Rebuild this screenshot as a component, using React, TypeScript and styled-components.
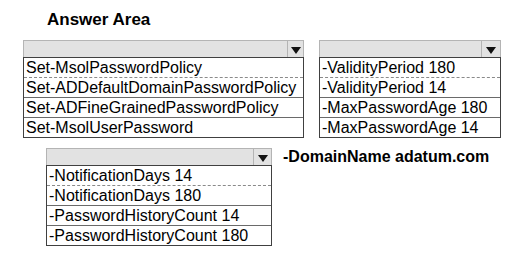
import styled, { createGlobalStyle } from "styled-components";

const GlobalStyle = createGlobalStyle`
  html, body {
    margin: 0;
    padding: 0;
    background: #ffffff;
  }
  body {
    font-family: "Liberation Sans", Arial, sans-serif;
    color: #000000;
  }
`;

type Box = {
  id: string;
  width: number;
  arrow: number;
  items: string[];
};

const cmdlets: Box = {
  id: "cmdlet",
  width: 281,
  arrow: 16,
  items: [
    "Set-MsolPasswordPolicy",
    "Set-ADDefaultDomainPasswordPolicy",
    "Set-ADFineGrainedPasswordPolicy",
    "Set-MsolUserPassword"
  ]
};

const validity: Box = {
  id: "validity",
  width: 182,
  arrow: 19,
  items: [
    "-ValidityPeriod 180",
    "-ValidityPeriod 14",
    "-MaxPasswordAge 180",
    "-MaxPasswordAge 14"
  ]
};

const notification: Box = {
  id: "notify",
  width: 226,
  arrow: 18,
  items: [
    "-NotificationDays 14",
    "-NotificationDays 180",
    "-PasswordHistoryCount 14",
    "-PasswordHistoryCount 180"
  ]
};

const DropDown = ({ box }: { box: Box }) => (
  <Select $width={box.width}>
    <Header>
      <HeaderFill />
      <ArrowBox $width={box.arrow}>
        <Triangle />
      </ArrowBox>
    </Header>
    <List>
      {box.items.map((item, i) => (
        <Option key={item} $index={i}>
          {item}
        </Option>
      ))}
    </List>
  </Select>
);

const App = () => {
  return (
    <>
      <GlobalStyle />
      <Page>
        <Title>Answer Area</Title>
        <TopRow>
          <DropDown box={cmdlets} />
          <DropDown box={validity} />
        </TopRow>
        <BottomRow>
          <DropDown box={notification} />
          <Domain>-DomainName adatum.com</Domain>
        </BottomRow>
      </Page>
    </>
  );
};

export default App;

const Page = styled.div`
  width: 529px;
  height: 258px;
  padding-top: 10px;
  box-sizing: border-box;
  display: flex;
  flex-direction: column;
`;

const Title = styled.h1`
  margin: 0 0 10px 47px;
  font-size: 17px;
  line-height: 20px;
  font-weight: bold;
`;

const TopRow = styled.div`
  display: flex;
  align-items: flex-start;
  gap: 15px;
  padding-left: 23px;
`;

const BottomRow = styled.div`
  display: flex;
  align-items: flex-start;
  gap: 11px;
  padding-left: 46px;
  margin-top: 10px;
`;

const Select = styled.div<{ $width: number }>`
  width: ${({ $width }) => $width}px;
  display: flex;
  flex-direction: column;
`;

const Header = styled.div`
  display: flex;
  height: 17px;
  box-sizing: border-box;
  background: #e2e2e2;
  border: 1px solid #b4b4b4;
  border-bottom: none;
`;

const HeaderFill = styled.div`
  flex: 1;
`;

const ArrowBox = styled.div<{ $width: number }>`
  width: ${({ $width }) => $width}px;
  border-left: 1px solid #b4b4b4;
  display: flex;
  align-items: flex-end;
  justify-content: center;
  padding-bottom: 3px;
  box-sizing: border-box;
`;

const Triangle = styled.div`
  width: 0;
  height: 0;
  border-left: 5px solid transparent;
  border-right: 5px solid transparent;
  border-top: 7px solid #111111;
`;

const List = styled.div`
  border: 1px solid #404040;
  display: flex;
  flex-direction: column;
`;

const Option = styled.div<{ $index: number }>`
  height: 19px;
  line-height: 19px;
  padding-left: 2px;
  font-size: 16px;
  white-space: nowrap;
  overflow: hidden;
  border-top: ${({ $index }) =>
    $index === 0
      ? "none"
      : $index === 1
      ? "1px dashed #8a8a8a"
      : "1px solid #6a6a6a"};
`;

const Domain = styled.div`
  height: 17px;
  line-height: 17px;
  font-size: 16px;
  font-weight: bold;
`;
